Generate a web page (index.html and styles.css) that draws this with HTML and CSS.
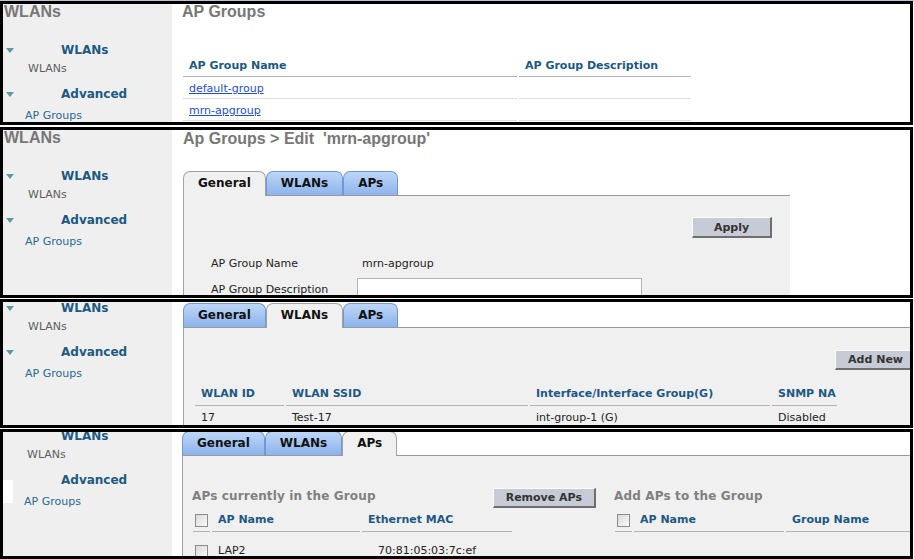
FILE: index.html
```html
<!DOCTYPE html>
<html>
<head>
<meta charset="utf-8">
<title>AP Groups</title>
<link rel="stylesheet" href="styles.css">
</head>
<body>
<div class="topline"></div>

<section class="panel p1">
  <div class="page">
    <nav class="side">
      <div class="side-title">WLANs</div>
      <div class="nav-group"><span class="tri"></span><span class="nav-head">WLANs</span></div>
      <div class="nav-item item-wlans">WLANs</div>
      <div class="nav-group adv"><span class="tri"></span><span class="nav-head">Advanced</span></div>
      <div class="nav-item item-ap">AP Groups</div>
    </nav>
    <main class="main list-main">
      <h1 class="heading">AP Groups</h1>
      <table class="grid list">
        <thead>
          <tr><th class="w-name">AP Group Name</th><th class="w-desc">AP Group Description</th></tr>
        </thead>
        <tbody>
          <tr><td><a href="#">default-group</a></td><td></td></tr>
          <tr><td><a href="#">mrn-apgroup</a></td><td></td></tr>
        </tbody>
      </table>
    </main>
  </div>
</section>

<section class="panel p2">
  <div class="page">
    <nav class="side">
      <div class="side-title">WLANs</div>
      <div class="nav-group"><span class="tri"></span><span class="nav-head">WLANs</span></div>
      <div class="nav-item item-wlans">WLANs</div>
      <div class="nav-group adv"><span class="tri"></span><span class="nav-head">Advanced</span></div>
      <div class="nav-item item-ap">AP Groups</div>
    </nav>
    <main class="main edit-main">
      <h1 class="heading">Ap Groups &gt; Edit&nbsp; 'mrn-apgroup'</h1>
      <div class="tabbox general">
        <div class="tabs">
          <span class="tab active">General</span><span class="tab">WLANs</span><span class="tab">APs</span>
        </div>
        <div class="tabbody">
          <div class="btnrow"><button class="btn">Apply</button></div>
          <table class="form">
            <tr><td class="lbl">AP Group Name</td><td class="val">mrn-apgroup</td></tr>
            <tr><td class="lbl">AP Group Description</td><td class="val"><input class="input" type="text"></td></tr>
          </table>
        </div>
      </div>
    </main>
  </div>
</section>

<section class="panel p3">
  <div class="page">
    <nav class="side">
      <div class="nav-group first"><span class="tri"></span><span class="nav-head">WLANs</span></div>
      <div class="nav-item item-wlans">WLANs</div>
      <div class="nav-group adv"><span class="tri"></span><span class="nav-head">Advanced</span></div>
      <div class="nav-item item-ap">AP Groups</div>
    </nav>
    <main class="main edit-main">
      <div class="tabbox wide">
        <div class="tabs">
          <span class="tab">General</span><span class="tab active">WLANs</span><span class="tab">APs</span>
        </div>
        <div class="tabbody">
          <div class="btnrow"><button class="btn">Add New</button></div>
          <table class="grid wlan">
            <thead>
              <tr><th class="w-id">WLAN ID</th><th class="w-ssid">WLAN SSID</th><th class="w-if">Interface/Interface Group(G)</th><th class="w-snmp">SNMP NA</th></tr>
            </thead>
            <tbody>
              <tr><td>17</td><td>Test-17</td><td>int-group-1 (G)</td><td>Disabled</td></tr>
            </tbody>
          </table>
        </div>
      </div>
    </main>
  </div>
</section>

<section class="panel p4">
  <div class="page">
    <nav class="side">
      <div class="nav-group first"><span class="nav-head">WLANs</span></div>
      <div class="nav-item item-wlans">WLANs</div>
      <div class="nav-group adv"><span class="nav-head">Advanced</span></div>
      <div class="nav-item item-ap">AP Groups</div>
    </nav>
    <main class="main edit-main aps-main">
      <div class="tabbox wide">
        <div class="tabs">
          <span class="tab">General</span><span class="tab">WLANs</span><span class="tab active">APs</span>
        </div>
        <div class="tabbody aps">
          <div class="sec sec-left">
            <div class="sec-head">
              <span class="sec-title">APs currently in the Group</span>
              <button class="btn">Remove APs</button>
            </div>
            <table class="grid aptable">
              <thead>
                <tr><th class="w-cb"><input class="cb" type="checkbox"></th><th class="w-apname">AP Name</th><th class="w-mac">Ethernet MAC</th></tr>
              </thead>
              <tbody>
                <tr><td class="cbcell"><input class="cb" type="checkbox"></td><td>LAP2</td><td class="mac">70:81:05:03:7c:ef</td></tr>
              </tbody>
            </table>
          </div>
          <div class="sec sec-right">
            <div class="sec-head">
              <span class="sec-title">Add APs to the Group</span>
            </div>
            <table class="grid aptable">
              <thead>
                <tr><th class="w-cb"><input class="cb" type="checkbox"></th><th class="w-apname2">AP Name</th><th class="w-group">Group Name</th></tr>
              </thead>
            </table>
          </div>
        </div>
      </div>
    </main>
  </div>
  <div class="artifact"></div>
</section>
</body>
</html>
```

FILE: styles.css
```css
* { box-sizing: border-box; }
html, body { margin: 0; padding: 0; }
body {
  width: 914px;
  height: 559px;
  overflow: hidden;
  background: #fff;
  font-family: "DejaVu Sans", Verdana, sans-serif;
  font-size: 11px;
  color: #222;
}

.topline { height: 1px; background: #b9c5d5; }

.panel {
  position: relative;
  width: 913px;
  border: 3px solid #000;
  overflow: hidden;
}
.p1 { height: 124px; margin-bottom: 2px; }
.p2 { height: 171px; margin-bottom: 1px; }
.p3 { height: 129px; margin-bottom: 1px; }
.p4 { height: 130px; }

.page { display: flex; min-height: 100%; }

/* sidebar */
.side { width: 169px; flex: none; background: #efefef; }
.side-title {
  margin-top: -2px;
  padding-left: 1px;
  font: bold 16px/20px "Liberation Sans", Arial, sans-serif;
  color: #777;
}
.nav-group {
  display: flex;
  align-items: center;
  height: 20px;
  margin-top: 18px;
  padding-left: 3px;
}
.nav-group.adv { margin-top: 6px; }
.p3 .nav-group.first { margin-top: -4px; }
.p4 .nav-group.first { margin-top: -6px; }
.tri {
  width: 0;
  height: 0;
  border-left: 4.5px solid transparent;
  border-right: 4.5px solid transparent;
  border-top: 5px solid #5d98a4;
}
.nav-head {
  margin-left: 47px;
  font-weight: bold;
  font-size: 12px;
  color: #1d5a82;
}
.p4 .nav-head { margin-left: 55px; }
.nav-item { line-height: 18px; font-size: 11px; }
.item-wlans { padding-left: 25px; color: #5e5e5e; }
.item-ap { padding-left: 22px; margin-top: 3px; color: #2b6a90; }
.p4 .item-wlans { padding-left: 24px; }
.p4 .item-ap { padding-left: 21px; }

/* main */
.main { flex: 1; min-width: 0; background: #fff; overflow: hidden; }
.list-main { padding-left: 10px; }
.edit-main { padding-left: 11px; }
.aps-main { padding-left: 10px; }
.heading {
  margin: -1px 0 0;
  font: bold 16px/20px "Liberation Sans", Arial, sans-serif;
  color: #777;
  white-space: nowrap;
}
.list-main .heading { margin-top: -2px; }

/* tables */
.grid { border-collapse: separate; border-spacing: 2px 0; }
.grid th {
  text-align: left;
  font-weight: bold;
  font-size: 11px;
  line-height: 14px;
  color: #1c5883;
  padding: 4px 6px;
  border-bottom: 1px solid #b4b4b4;
  white-space: nowrap;
}
.grid td {
  font-size: 11px;
  line-height: 14px;
  padding: 5px 6px 2px;
  border-bottom: 1px solid #dedede;
  white-space: nowrap;
}
.list { margin: 33px 0 0 -1px; }
.list th { padding: 4px 6px 3px; }
.list td { padding: 5px 6px 2px; }
.w-name { width: 334px; }
.w-desc { width: 172px; }
.list a { color: #1f4fc4; text-decoration: underline; }

/* tabs */
.tabbox { width: 607px; }
.tabbox.wide { width: 752px; }
.tabs {
  display: flex;
  align-items: flex-start;
  height: 25px;
  margin-top: 22px;
  border-bottom: 1px solid #9a9a9a;
}
.p3 .tabs { margin-top: 1px; }
.p4 .tabs { margin-top: -1px; }
.tab {
  height: 24px;
  padding: 0 14px;
  line-height: 23px;
  border: 1px solid #7398cf;
  border-bottom: none;
  border-radius: 7px 7px 0 0;
  background: linear-gradient(#bdd6f8, #8db4ec);
  font-weight: bold;
  font-size: 12px;
  color: #111;
}
.tab.active {
  height: 25px;
  background: #f0f0f0;
  border-color: #a2a2a2;
}
.tabbody {
  background: #f0f0f0;
  border-left: 1px solid #a2a2a2;
  min-height: 200px;
}

.btnrow { display: flex; justify-content: flex-end; padding: 21px 18px 0 0; }
.p3 .btnrow { padding-top: 22px; }
.btn {
  height: 21px;
  min-width: 80px;
  padding: 0 12px;
  background: #c6cbd5;
  border-style: solid;
  border-width: 1px 2px 2px 1px;
  border-color: #fbfbfb #6e6e6e #6e6e6e #fbfbfb;
  font: bold 11px "DejaVu Sans", Verdana, sans-serif;
  color: #333;
}
.p3 .btn { height: 20px; }

.form { margin: 12px 0 0 27px; border-collapse: collapse; }
.form td { height: 26px; padding: 0; font-size: 11px; color: #222; }
.form .lbl { width: 147px; }
.form .val { padding-left: 4px; }
.input {
  display: block;
  width: 285px;
  height: 22px;
  margin-left: -5px;
  border: 1px solid #b4b4b4;
  background: #fff;
}

.wlan { margin: 13px 0 0 9px; }
.w-id { width: 89px; }
.w-ssid { width: 242px; }
.w-if { width: 240px; }
.wlan th.w-snmp { padding-right: 1px; }
.wlan td { padding-top: 5px; }

/* APs tab */
.aps { display: flex; padding: 30px 0 0 9px; }
.sec-left { width: 404px; flex: none; }
.sec-right { margin-left: 18px; flex: none; }
.sec-head {
  display: flex;
  justify-content: space-between;
  align-items: flex-end;
  height: 22px;
  margin-bottom: 1px;
}
.sec-title {
  align-self: flex-start;
  font-weight: bold;
  font-size: 12px;
  line-height: 20px;
  letter-spacing: 0.15px;
  color: #808080;
  white-space: nowrap;
}
.sec-head .btn { height: 20px; }
.aptable { margin-left: -1px; }
.aptable th.w-cb { width: 15px; padding: 4px 2px; }
.w-apname { width: 148px; }
.w-mac { width: 150px; }
.w-apname2 { width: 150px; }
.w-group { width: 150px; }
.aptable td { padding: 11px 6px 4px; border-bottom: none; }
.aptable td.cbcell { padding: 13px 2px 4px; }
.aptable td.mac { padding-left: 16px; }
.cb {
  display: block;
  -webkit-appearance: none;
  appearance: none;
  width: 13px;
  height: 13px;
  margin: 0;
  border: 1px solid #8c8c8c;
  background: linear-gradient(135deg, #d8d8d8, #fbfbfb);
}

.artifact {
  position: absolute;
  left: 0;
  top: 48px;
  width: 10px;
  height: 23px;
  background: #fff;
}
```
